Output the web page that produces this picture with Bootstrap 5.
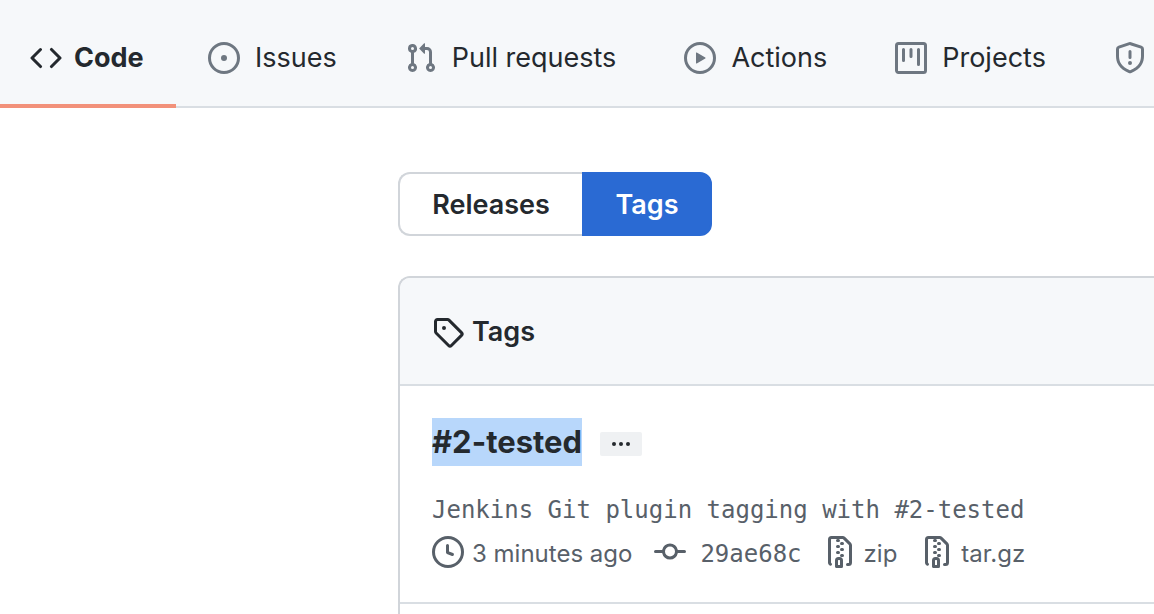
<!DOCTYPE html>
<html lang="en">
<head>
<meta charset="utf-8">
<meta name="viewport" content="width=device-width, initial-scale=1">
<title>Tags</title>
<link href="https://cdn.jsdelivr.net/npm/bootstrap@5.3.0/dist/css/bootstrap.min.css" rel="stylesheet">
<style>
body { font-family: Inter, "Liberation Sans", sans-serif; font-size: 27px; line-height: 32px; color: #24292e; background: #fff; }
svg { fill: currentColor; flex: none; }
.octicon { width: 32px; height: 32px; }
.repo-nav { background: #f6f8fa; box-shadow: inset 0 -2px #d9dee3; padding-top: 8px; overflow: hidden; }
.repo-nav .nav-link { color: #24292e; padding: 0 32px; margin-right: 4px; gap: 15px; height: 100px; white-space: nowrap; }
.repo-nav .nav-link svg { color: #6e7781; }
.repo-nav .nav-link.active { width: 176px; padding: 4px 0 0 30px; margin-right: 0; gap: 12px; font-weight: 700; border-bottom: 4px solid #f2917a; }
.repo-nav .nav-link.active svg { color: #24292e; }
.content { padding: 64px 0 0 398px; }
.subnav .btn { --bs-btn-font-size: 27px; --bs-btn-line-height: 32px; --bs-btn-font-weight: 600; --bs-btn-border-width: 2px; --bs-btn-border-radius: 12px; --bs-btn-padding-x: 30px; --bs-btn-color: #24292e; --bs-btn-border-color: #d1d5da; --bs-btn-active-color: #fff; --bs-btn-active-bg: #2a6ad3; --bs-btn-active-border-color: #2a6ad3; height: 64px; padding-top: 15px; padding-bottom: 13px; white-space: nowrap; }
.subnav > .btn:first-child { width: 184px; border-right: 0; }
.subnav.btn-group > .btn:last-child { width: 130px; margin-left: 0; color: #fff; }
.tag-box { --bs-card-border-color: #d1d5da; --bs-card-border-radius: 12px; --bs-card-inner-border-radius: 10px; --bs-card-border-width: 2px; margin-top: 40px; border-right: 0; border-bottom: 0; border-radius: 12px 0 0 0; color: inherit; }
.tag-box .card-header { background: #f6f8fa; border-bottom: 2px solid #d9dee3; border-radius: 10px 0 0 0; height: 108px; padding: 2px 32px 0; gap: 8px; }
.tag-box h2 { font-size: 27px; line-height: 32px; font-weight: 600; }
.tag-item { padding: 32px 32px 34px; border-bottom: 2px solid #d9dee3; }
.tag-name { font-size: 31px; line-height: 48px; font-weight: 700; }
.tag-name a { display: block; color: inherit; background: #b8d7fb; }
.more-btn { --bs-btn-bg: #eff1f3; --bs-btn-border-width: 0; --bs-btn-border-radius: 2px; --bs-btn-padding-x: 0; --bs-btn-padding-y: 0; --bs-btn-color: #24292e; width: 42px; height: 24px; margin: 4px 0 0 18px; }
.tag-meta, .tag-message { color: #586069; font-size: 24px; }
.tag-message { font-family: "DejaVu Sans Mono", monospace; line-height: 36px; margin: 26px 0 0; }
.tag-meta { margin-top: 8px; line-height: 32px; white-space: nowrap; }
.tag-meta li { gap: 8px; margin-right: 24px; height: 32px; }
.tag-meta li:first-child { margin-right: 22px; }
.tag-meta li:nth-child(2) { margin-right: 22px; }
.tag-meta a { color: inherit; gap: 8px; height: 32px; }
.tag-meta span { padding-top: 3px; }
.tag-meta .commit { gap: 14px; font-family: "DejaVu Sans Mono", monospace; }
</style>
</head>
<body>
<header>
<nav class="repo-nav nav flex-nowrap" aria-label="Repository">
  <a class="nav-link active d-flex align-items-center flex-shrink-0" aria-current="page" href="#">
    <svg class="octicon" viewBox="0 0 16 16" aria-hidden="true"><path d="M4.72 3.22a.75.75 0 011.06 1.06L2.06 8l3.72 3.72a.75.75 0 11-1.06 1.06L.47 8.53a.75.75 0 010-1.06l4.25-4.25zm6.56 0a.75.75 0 10-1.06 1.06L13.94 8l-3.72 3.72a.75.75 0 101.06 1.06l4.25-4.25a.75.75 0 000-1.06l-4.25-4.25z"/></svg>
    <span>Code</span></a>
  <a class="nav-link d-flex align-items-center flex-shrink-0" href="#">
    <svg class="octicon" viewBox="0 0 16 16" aria-hidden="true"><path d="M8 9.5a1.5 1.5 0 100-3 1.5 1.5 0 000 3z"/><path fill-rule="evenodd" d="M8 0a8 8 0 100 16A8 8 0 008 0zM1.5 8a6.5 6.5 0 1113 0 6.5 6.5 0 01-13 0z"/></svg>
    <span>Issues</span></a>
  <a class="nav-link d-flex align-items-center flex-shrink-0" href="#">
    <svg class="octicon" viewBox="0 0 16 16" aria-hidden="true"><path fill-rule="evenodd" d="M7.177 3.073L9.573.677A.25.25 0 0110 .854v4.792a.25.25 0 01-.427.177L7.177 3.427a.25.25 0 010-.354zM3.75 2.5a.75.75 0 100 1.5.75.75 0 000-1.5zm-2.25.75a2.25 2.25 0 113 2.122v5.256a2.251 2.251 0 11-1.5 0V5.372A2.25 2.25 0 011.5 3.25zM11 2.5h-1V4h1a1 1 0 011 1v5.628a2.251 2.251 0 101.5 0V5A2.5 2.5 0 0011 2.5zm1 10.25a.75.75 0 111.5 0 .75.75 0 01-1.5 0zM3.75 12a.75.75 0 100 1.5.75.75 0 000-1.5z"/></svg>
    <span>Pull requests</span></a>
  <a class="nav-link d-flex align-items-center flex-shrink-0" href="#">
    <svg class="octicon" viewBox="0 0 16 16" aria-hidden="true"><path fill-rule="evenodd" d="M1.5 8a6.5 6.5 0 1113 0 6.5 6.5 0 01-13 0zM8 0a8 8 0 100 16A8 8 0 008 0zM6.379 5.227A.25.25 0 006 5.442v5.117a.25.25 0 00.379.214l4.264-2.559a.25.25 0 000-.428L6.379 5.227z"/></svg>
    <span>Actions</span></a>
  <a class="nav-link d-flex align-items-center flex-shrink-0" href="#">
    <svg class="octicon" viewBox="0 0 16 16" aria-hidden="true"><path fill-rule="evenodd" d="M1.75 0A1.75 1.75 0 000 1.75v12.5C0 15.216.784 16 1.75 16h12.5A1.75 1.75 0 0016 14.25V1.75A1.75 1.75 0 0014.25 0H1.75zM1.5 1.75a.25.25 0 01.25-.25h12.5a.25.25 0 01.25.25v12.5a.25.25 0 01-.25.25H1.75a.25.25 0 01-.25-.25V1.75zM11.75 3a.75.75 0 00-.75.75v7.5a.75.75 0 001.5 0v-7.5a.75.75 0 00-.75-.75zm-8.25.75a.75.75 0 011.5 0v5.5a.75.75 0 01-1.5 0v-5.5zM8 3a.75.75 0 00-.75.75v3.5a.75.75 0 001.5 0v-3.5A.75.75 0 008 3z"/></svg>
    <span>Projects</span></a>
  <a class="nav-link d-flex align-items-center flex-shrink-0 pe-0 me-0" href="#" aria-label="Security">
    <svg class="octicon" viewBox="0 0 16 16" aria-hidden="true"><path fill-rule="evenodd" d="M7.467.133a1.75 1.75 0 011.066 0l5.25 1.68A1.75 1.75 0 0115 3.48V7c0 1.566-.32 3.182-1.303 4.682-.983 1.498-2.585 2.813-5.032 3.855a1.7 1.7 0 01-1.33 0c-2.447-1.042-4.049-2.357-5.032-3.855C1.32 10.182 1 8.566 1 7V3.48a1.75 1.75 0 011.217-1.667l5.25-1.68zm.61 1.429a.25.25 0 00-.153 0l-5.25 1.68a.25.25 0 00-.174.238V7c0 1.358.275 2.666 1.057 3.86.784 1.194 2.121 2.34 4.366 3.297a.2.2 0 00.154 0c2.245-.956 3.582-2.104 4.366-3.298C13.225 9.666 13.5 8.36 13.5 7V3.48a.25.25 0 00-.174-.237l-5.25-1.68zM9 10.5a1 1 0 11-2 0 1 1 0 012 0zm-.25-5.75a.75.75 0 10-1.5 0v3a.75.75 0 001.5 0v-3z"/></svg></a>
</nav>
</header>
<main class="content">
  <div class="subnav btn-group d-flex" role="group" aria-label="Releases and tags">
    <button type="button" class="btn flex-grow-0 flex-shrink-0">Releases</button>
    <button type="button" class="btn active flex-grow-0 flex-shrink-0">Tags</button>
  </div>
  <section class="tag-box card">
    <div class="card-header d-flex align-items-center">
      <svg class="octicon" viewBox="0 0 16 16" aria-hidden="true"><path fill-rule="evenodd" d="M2.5 7.775V2.75a.25.25 0 01.25-.25h5.025a.25.25 0 01.177.073l6.25 6.25a.25.25 0 010 .354l-5.025 5.025a.25.25 0 01-.354 0l-6.25-6.25a.25.25 0 01-.073-.177zm-1.5 0V2.75C1 1.784 1.784 1 2.75 1h5.025c.464 0 .91.184 1.238.513l6.25 6.25a1.75 1.75 0 010 2.474l-5.026 5.026a1.75 1.75 0 01-2.474 0l-6.25-6.25A1.75 1.75 0 011 7.775zM6 5a1 1 0 100 2 1 1 0 000-2z"/></svg>
      <h2 class="mb-0">Tags</h2>
    </div>
    <article class="tag-item">
      <div class="d-flex align-items-center">
        <h3 class="tag-name mb-0"><a class="text-decoration-none" href="#">#2-tested</a></h3>
        <button type="button" class="more-btn btn d-flex align-items-center justify-content-center" aria-label="Toggle message">
          <svg width="18" height="6" viewBox="0 0 18 6" aria-hidden="true"><circle cx="2" cy="3" r="2"/><circle cx="9" cy="3" r="2"/><circle cx="16" cy="3" r="2"/></svg>
        </button>
      </div>
      <p class="tag-message">Jenkins Git plugin tagging with #2-tested</p>
      <ul class="tag-meta list-unstyled d-flex mb-0">
        <li class="d-flex align-items-center">
          <svg class="octicon" viewBox="0 0 16 16" aria-hidden="true"><path fill-rule="evenodd" d="M1.5 8a6.5 6.5 0 1113 0 6.5 6.5 0 01-13 0zM8 0a8 8 0 100 16A8 8 0 008 0zm.5 4.75a.75.75 0 00-1.5 0v3.5a.75.75 0 00.471.696l2.5 1a.75.75 0 00.557-1.392L8.5 7.742V4.75z"/></svg>
          <span>3 minutes ago</span></li>
        <li><a class="commit d-flex align-items-center text-decoration-none" href="#">
          <svg class="octicon" viewBox="0 0 16 16" aria-hidden="true"><path fill-rule="evenodd" d="M10.5 7.75a2.5 2.5 0 11-5 0 2.5 2.5 0 015 0zm1.43.75a4.002 4.002 0 01-7.86 0H.75a.75.75 0 110-1.5h3.32a4.001 4.001 0 017.86 0h3.32a.75.75 0 110 1.5h-3.32z"/></svg>
          <span>29ae68c</span></a></li>
        <li><a class="d-flex align-items-center text-decoration-none" href="#">
          <svg class="octicon" viewBox="0 0 16 16" aria-hidden="true"><path id="zip-file" fill-rule="evenodd" d="M3.5 1.75a.25.25 0 01.25-.25h3a.75.75 0 000 1.5h.5a.75.75 0 000-1.5h2.086a.25.25 0 01.177.073l2.914 2.914a.25.25 0 01.073.177v8.586a.25.25 0 01-.25.25h-.5a.75.75 0 000 1.5h.5A1.75 1.75 0 0014 13.25V4.664c0-.464-.184-.909-.513-1.237L10.573.513A1.75 1.75 0 009.336 0H3.75A1.75 1.75 0 002 1.75v11.5c0 .649.353 1.214.874 1.515a.75.75 0 10.752-1.298.25.25 0 01-.126-.217V1.75zM8.75 3a.75.75 0 000 1.5h.5a.75.75 0 000-1.5h-.5zM6 5.25a.75.75 0 01.75-.75h.5a.75.75 0 010 1.5h-.5A.75.75 0 016 5.25zm2 1.5A.75.75 0 018.75 6h.5a.75.75 0 010 1.5h-.5A.75.75 0 018 6.75zm-1.25.75a.75.75 0 000 1.5h.5a.75.75 0 000-1.5h-.5zM8 9.75A.75.75 0 018.75 9h.5a.75.75 0 010 1.5h-.5A.75.75 0 018 9.75zm-.75.75a1.75 1.75 0 00-1.75 1.75v3c0 .414.336.75.75.75h2.5a.75.75 0 00.75-.75v-3a1.75 1.75 0 00-1.75-1.75h-.5zM7 12.25a.25.25 0 01.25-.25h.5a.25.25 0 01.25.25v2.25H7v-2.25z"/></svg>
          <span>zip</span></a></li>
        <li><a class="d-flex align-items-center text-decoration-none" href="#">
          <svg class="octicon" viewBox="0 0 16 16" aria-hidden="true"><use href="#zip-file"/></svg>
          <span>tar.gz</span></a></li>
      </ul>
    </article>
    <div class="card-body"></div>
  </section>
</main>
<script src="https://cdn.jsdelivr.net/npm/bootstrap@5.3.0/dist/js/bootstrap.bundle.min.js"></script>
</body>
</html>
